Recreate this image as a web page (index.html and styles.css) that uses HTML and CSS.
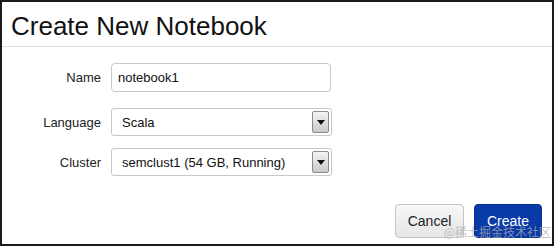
FILE: index.html
```html
<!DOCTYPE html>
<html lang="en">
<head>
    <meta charset="UTF-8">
    <link rel="stylesheet" href="styles.css">
    <title>Create New Notebook</title>
</head>
<body>
    <div class="dialog">
        <div class="dialog-header">
            <h1>Create New Notebook</h1>
        </div>
        <form class="dialog-body">
            <div class="row row-name">
                <label for="name">Name</label>
                <input type="text" id="name" value="notebook1">
            </div>
            <div class="row row-language">
                <label>Language</label>
                <div class="select">
                    <span>Scala</span>
                    <span class="select-btn"><span class="arrow"></span></span>
                </div>
            </div>
            <div class="row row-cluster">
                <label>Cluster</label>
                <div class="select">
                    <span>semclust1 (54 GB, Running)</span>
                    <span class="select-btn"><span class="arrow"></span></span>
                </div>
            </div>
            <div class="actions">
                <button type="button" class="btn btn-cancel">Cancel</button>
                <button type="submit" class="btn btn-create">Create</button>
            </div>
        </form>
        <div class="watermark">@稀土掘金技术社区</div>
    </div>
</body>
</html>
```

FILE: styles.css
```css
body {
    margin: 0;
    font-family: "Liberation Sans", Arial, sans-serif;
    background: #fff;
}

.dialog {
    position: relative;
    width: 554px;
    height: 246px;
    box-sizing: border-box;
    border: 2px solid #1a1a1a;
    background: #fff;
}

.dialog-header {
    height: 45px;
    border-bottom: 1px solid #dcdcdc;
    padding-left: 9px;
    box-sizing: border-box;
}

h1 {
    margin: 0;
    padding-top: 9px;
    font-size: 26px;
    font-weight: normal;
    color: #111;
}

.dialog-body {
    padding-top: 16px;
}

.row {
    display: flex;
    align-items: center;
}

.row label {
    width: 99px;
    text-align: right;
    margin-right: 10px;
    font-size: 13px;
    color: #222;
}

.row-language {
    margin-top: 16px;
}

.row-cluster {
    margin-top: 12px;
}

input {
    width: 220px;
    height: 29px;
    box-sizing: border-box;
    padding: 0 6px;
    border: 1px solid #c8c8c8;
    border-radius: 4px;
    font-family: "Liberation Sans", Arial, sans-serif;
    font-size: 13px;
    color: #111;
}

.select {
    width: 221px;
    height: 28px;
    box-sizing: border-box;
    border: 1px solid #c8c8c8;
    border-radius: 3px;
    display: flex;
    align-items: center;
    justify-content: space-between;
    padding: 0 2px 0 10px;
    font-size: 13px;
    color: #111;
}

.select-btn {
    width: 17px;
    height: 22px;
    box-sizing: border-box;
    border: 1px solid #8a8a8a;
    border-radius: 2px;
    background: linear-gradient(#f4f4f4, #c9c9c9);
    display: flex;
    justify-content: center;
    align-items: center;
}

.arrow {
    width: 0;
    height: 0;
    border-left: 4px solid transparent;
    border-right: 4px solid transparent;
    border-top: 5px solid #111;
}

.actions {
    display: flex;
    justify-content: flex-end;
    gap: 10px;
    margin-top: 28px;
    padding-right: 10px;
}

.btn {
    height: 34px;
    padding: 0 11px;
    border-radius: 4px;
    font-family: "Liberation Sans", Arial, sans-serif;
    font-size: 14px;
    cursor: pointer;
}

.btn-cancel {
    width: 69px;
    background: linear-gradient(#f7f7f7, #e6e6e6);
    border: 1px solid #c4c4c4;
    color: #222;
}

.btn-create {
    width: 68px;
    background: #0a3aa8;
    border: 1px solid #06308f;
    color: #fff;
}

.watermark {
    position: absolute;
    right: 1px;
    bottom: 4px;
    font-family: "Noto Sans CJK SC", sans-serif;
    font-size: 12px;
    line-height: 16px;
    color: rgba(175, 175, 175, 0.75);
}
```
